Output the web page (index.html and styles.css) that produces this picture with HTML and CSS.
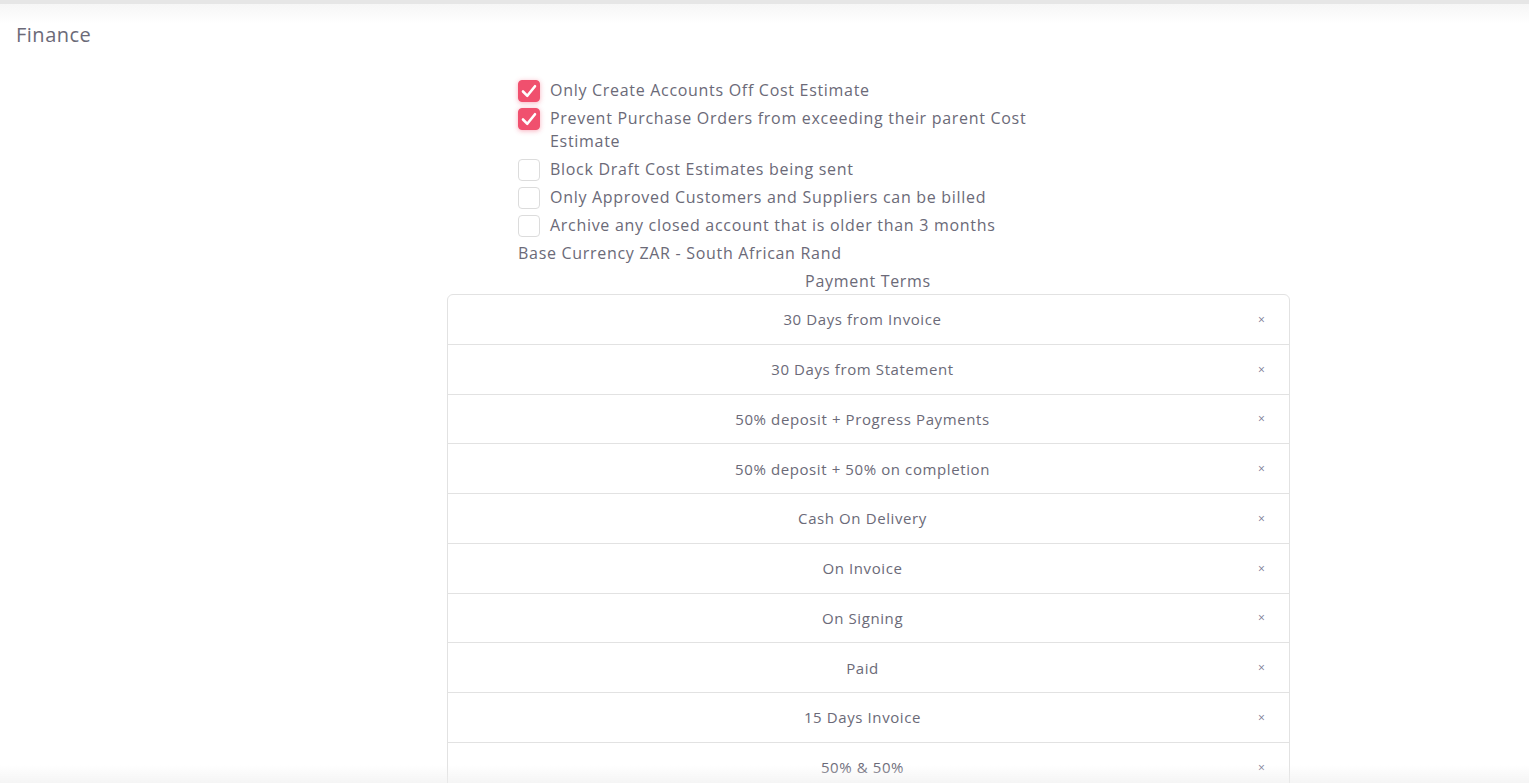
FILE: index.html
```html
<!DOCTYPE html>
<html>
<head>
<meta charset="utf-8">
<link rel="stylesheet" href="styles.css">
</head>
<body>
<div class="topbar"></div>
<div class="page">
  <h1 class="title">Finance</h1>
  <div class="content">
    <div class="settings">
      <label class="opt"><span class="box checked"><svg viewBox="0 0 22 22" width="22" height="22"><path d="M5 11.5 L9.3 15.8 L17 6.2" fill="none" stroke="#fff" stroke-width="2.6" stroke-linecap="round" stroke-linejoin="round"/></svg></span><span class="lbl">Only Create Accounts Off Cost Estimate</span></label>
      <label class="opt"><span class="box checked"><svg viewBox="0 0 22 22" width="22" height="22"><path d="M5 11.5 L9.3 15.8 L17 6.2" fill="none" stroke="#fff" stroke-width="2.6" stroke-linecap="round" stroke-linejoin="round"/></svg></span><span class="lbl">Prevent Purchase Orders from exceeding their parent Cost Estimate</span></label>
      <label class="opt"><span class="box"></span><span class="lbl">Block Draft Cost Estimates being sent</span></label>
      <label class="opt"><span class="box"></span><span class="lbl">Only Approved Customers and Suppliers can be billed</span></label>
      <label class="opt"><span class="box"></span><span class="lbl">Archive any closed account that is older than 3 months</span></label>
      <div class="currency">Base Currency ZAR - South African Rand</div>
    </div>
    <div class="terms-title">Payment Terms</div>
    <ul class="terms">
      <li class="term"><span class="name">30 Days from Invoice</span><span class="x">×</span></li>
      <li class="term"><span class="name">30 Days from Statement</span><span class="x">×</span></li>
      <li class="term"><span class="name">50% deposit + Progress Payments</span><span class="x">×</span></li>
      <li class="term"><span class="name">50% deposit + 50% on completion</span><span class="x">×</span></li>
      <li class="term"><span class="name">Cash On Delivery</span><span class="x">×</span></li>
      <li class="term"><span class="name">On Invoice</span><span class="x">×</span></li>
      <li class="term"><span class="name">On Signing</span><span class="x">×</span></li>
      <li class="term"><span class="name">Paid</span><span class="x">×</span></li>
      <li class="term"><span class="name">15 Days Invoice</span><span class="x">×</span></li>
      <li class="term"><span class="name">50% &amp; 50%</span><span class="x">×</span></li>
    </ul>
  </div>
</div>
<div class="bottomfade"></div>
</body>
</html>
```
FILE: styles.css
```css
html, body {
  margin: 0;
  padding: 0;
  background: #fff;
  overflow: hidden;
}
body {
  font-family: "Open Sans", "Noto Sans", sans-serif;
  color: #6b6a78;
  height: 783px;
}
.topbar {
  height: 4px;
  background: #e6e6e6;
}
.page {
  background: linear-gradient(#f6f6f6, #fff 20px);
  padding: 0 16px;
  height: 779px;
}
.title {
  margin: 0;
  padding-top: 19px;
  font-size: 20px;
  letter-spacing: 0.5px;
  font-weight: 400;
  line-height: 24px;
  color: #6b6a78;
}
.content {
  margin-left: 207px;
}
.settings {
  width: 700px;
  margin: 32px auto 0;
  display: flex;
  flex-direction: column;
  gap: 5px;
  font-size: 16px;
  letter-spacing: 0.7px;
  line-height: 23px;
}
.opt {
  display: flex;
  align-items: flex-start;
  gap: 10px;
}
.box {
  flex: 0 0 auto;
  width: 20px;
  height: 20px;
  margin-top: 1px;
  border: 1px solid #dcdcdc;
  border-radius: 4px;
  background: #fff;
  position: relative;
}
.box.checked {
  background: #f0506e;
  border-color: #f0506e;
  box-shadow: 0 1px 5px rgba(240, 80, 110, 0.45);
}
.box svg {
  position: absolute;
  left: -1px;
  top: -1px;
}
.lbl {
  max-width: 485px;
}
.currency {
  line-height: 23px;
}
.terms-title {
  text-align: center;
  font-size: 16px;
  letter-spacing: 0.7px;
  line-height: 20px;
  margin-top: 6px;
}
.terms {
  list-style: none;
  margin: 3px auto 0;
  padding: 0;
  width: 841px;
  border: 1px solid #e2e2e2;
  border-radius: 6px 6px 0 0;
}
.term {
  height: 48.75px;
  border-bottom: 1px solid #e2e2e2;
  display: flex;
  align-items: center;
  font-size: 15px;
  letter-spacing: 0.6px;
  padding-left: 43px;
}
.name {
  flex: 1;
  text-align: center;
}
.x {
  width: 54px;
  text-align: center;
  font-size: 12px;
  letter-spacing: 0;
  color: #7b7b96;
}
.bottomfade {
  position: fixed;
  left: 0;
  right: 0;
  bottom: 0;
  height: 18px;
  background: linear-gradient(rgba(240, 240, 240, 0), rgba(238, 238, 238, 0.6));
  pointer-events: none;
}
```
